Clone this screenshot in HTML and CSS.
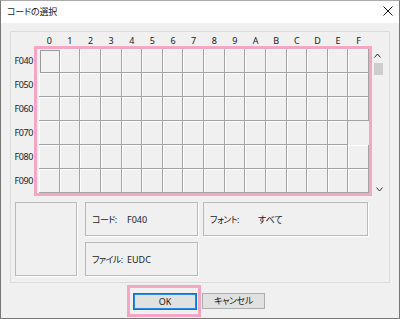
FILE: index.html
```html
<!DOCTYPE html>
<html lang="ja">
<head>
<meta charset="utf-8">
<link rel="stylesheet" href="styles.css">
</head>
<body>
<div class="window">
  <div class="titlebar">
    <span class="title">コードの選択</span>
    <svg class="close" width="10" height="10" viewBox="0 0 10 10"><path d="M0.5 0.5 L9.5 9.5 M9.5 0.5 L0.5 9.5" stroke="#111" stroke-width="1" fill="none"/></svg>
  </div>
  <div class="client">
    <div class="panel">
      <div class="board">
        <div class="colhead">
          <span>0</span><span>1</span><span>2</span><span>3</span><span>4</span><span>5</span><span>6</span><span>7</span><span>8</span><span>9</span><span>A</span><span>B</span><span>C</span><span>D</span><span>E</span><span>F</span>
        </div>
        <div class="rowhead">
          <span>F040</span><span>F050</span><span>F060</span><span>F070</span><span>F080</span><span>F090</span>
        </div>
        <div class="frame">
          <div class="cells">
            <i class="sel"></i><i></i><i></i><i></i><i></i><i></i><i></i><i></i><i></i><i></i><i></i><i></i><i></i><i></i><i></i><i></i>
            <i></i><i></i><i></i><i></i><i></i><i></i><i></i><i></i><i></i><i></i><i></i><i></i><i></i><i></i><i></i><i></i>
            <i></i><i></i><i></i><i></i><i></i><i></i><i></i><i></i><i></i><i></i><i></i><i></i><i></i><i></i><i></i><i></i>
            <i></i><i></i><i></i><i></i><i></i><i></i><i></i><i></i><i></i><i></i><i></i><i></i><i></i><i></i><i></i><i class="empty"></i>
            <i></i><i></i><i></i><i></i><i></i><i></i><i></i><i></i><i></i><i></i><i></i><i></i><i></i><i></i><i></i><i></i>
            <i></i><i></i><i></i><i></i><i></i><i></i><i></i><i></i><i></i><i></i><i></i><i></i><i></i><i></i><i></i><i></i>
          </div>
        </div>
        <div class="scroll">
          <svg class="arrow" width="7" height="5" viewBox="0 0 7 5"><path d="M0.5 4.5 L3.5 1 L6.5 4.5" stroke="#333" stroke-width="1" fill="none"/></svg>
          <div class="thumb"></div>
          <div class="spacer"></div>
          <svg class="arrow down" width="7" height="5" viewBox="0 0 7 5"><path d="M0.5 0.5 L3.5 4 L6.5 0.5" stroke="#333" stroke-width="1" fill="none"/></svg>
        </div>
      </div>
      <div class="info">
        <div class="preview"></div>
        <div class="fields">
          <div class="field code"><span class="lbl">コード:</span><span>F040</span></div>
          <div class="field font"><span class="lbl wide">フォント:</span><span>すべて</span></div>
          <div class="field file"><span class="lbl">ファイル:</span><span>EUDC</span></div>
        </div>
      </div>
    </div>
    <div class="buttons">
      <div class="mark"><button class="btn ok">OK</button></div>
      <button class="btn cancel">キャンセル</button>
    </div>
  </div>
</div>
</body>
</html>
```

FILE: styles.css
```css
* { box-sizing: border-box; }
html, body { margin: 0; padding: 0; background: #f0f0f0; }
body {
  font-family: "Noto Sans", "Noto Sans CJK JP", sans-serif;
  font-size: 9px;
  color: #1a1a1a;
  font-feature-settings: "palt";
}
.window {
  width: 400px;
  height: 319px;
  border: 1px solid #777;
  border-top-color: #aaa;
  background: #f0f0f0;
  display: flex;
  flex-direction: column;
}
.titlebar {
  height: 22px;
  background: #fff;
  display: flex;
  align-items: center;
  justify-content: space-between;
  padding: 0 6px 2px 6px;
  flex: none;
}
.title { font-size: 9px; letter-spacing: -0.2px; }
.close { display: block; }
.client {
  flex: 1;
  padding: 8px 0 0 9px;
}
.panel {
  width: 380px;
  height: 252px;
  border: 1px solid #dcdcdc;
}
.board {
  display: grid;
  grid-template-columns: 23px 338px 13px;
  grid-template-rows: 14px 150px;
}
.colhead {
  grid-column: 2;
  grid-row: 1;
  display: grid;
  grid-template-columns: repeat(16, 1fr);
  width: 330px;
  margin-left: 5px;
}
.colhead span {
  text-align: center;
  line-height: 12px;
  margin-top: 3px;
}
.rowhead {
  grid-column: 1;
  grid-row: 2;
  padding-top: 3px;
  display: grid;
  grid-template-rows: repeat(6, 24px);
}
.rowhead span {
  line-height: 24px;
  text-align: right;
  padding-right: 1px;
  letter-spacing: -0.4px;
}
.frame {
  grid-column: 2;
  grid-row: 2;
  border: 3px solid #f4a6c3;
  padding-left: 2px;
}
.cells {
  display: grid;
  grid-template-columns: repeat(16, 1fr);
  grid-template-rows: repeat(6, 24px);
  width: 330px;
}
.cells i {
  display: block;
  background: #f0f0f0;
  border-right: 1px solid #a3a3a3;
  border-bottom: 1px solid #a3a3a3;
  box-shadow: inset 1px 1px 0 #fdfdfd;
}
.cells i.sel {
  margin: 1px 0 0 1px;
  border: 1px solid #9c9c9c;
  box-shadow: none;
  background: #f2f2f2;
}
.cells i.empty {
  border: none;
  box-shadow: none;
}
.scroll {
  grid-column: 3;
  grid-row: 2;
  display: flex;
  flex-direction: column;
  align-items: center;
  padding: 7px 0 4px 0;
}
.arrow { display: block; margin-left: -2px; }
.arrow.down { margin-left: 1px; }
.thumb {
  width: 9px;
  height: 12px;
  background: #cdcdcd;
  margin-top: 5px;
}
.spacer { flex: 1; }
.info {
  display: flex;
  margin-top: 6px;
  padding-left: 4px;
}
.preview {
  width: 62px;
  height: 74px;
  border: 1px solid #b9b9b9;
  box-shadow: 1px 1px 0 #fff;
}
.fields {
  margin-left: 8px;
  display: grid;
  grid-template-columns: 113px 165px;
  grid-template-rows: 34px 34px;
  column-gap: 5px;
  row-gap: 6px;
}
.field {
  border: 1px solid #b9b9b9;
  box-shadow: 1px 1px 0 #fff;
  display: flex;
  align-items: center;
  padding-left: 6px;
  white-space: nowrap;
}
.field.code { grid-column: 1; grid-row: 1; }
.field.font { grid-column: 2; grid-row: 1; }
.field.file { grid-column: 1; grid-row: 2; }
.lbl { width: 35px; flex: none; letter-spacing: -0.6px; overflow: visible; }
.lbl.wide { width: 48px; }
.buttons {
  display: flex;
  align-items: flex-start;
  margin-top: 2px;
  padding-left: 117px;
}
.mark {
  border: 3px solid #f4a6c3;
  padding: 5px 1px 4px 3px;
}
.btn {
  font-family: inherit;
  font-size: 9px;
  font-feature-settings: "palt";
  color: #1a1a1a;
  background: #e1e1e1;
  margin: 0;
  padding: 0;
  line-height: 14px;
}
.btn.ok {
  width: 64px;
  height: 17px;
  border: 1px solid #0078d7;
  box-shadow: inset 0 0 0 1px #2a8ae0;
  display: block;
}
.btn.cancel {
  width: 63px;
  height: 16px;
  margin: 8px 0 0 1px;
  border: 1px solid #adadad;
  letter-spacing: -0.4px;
}
```
